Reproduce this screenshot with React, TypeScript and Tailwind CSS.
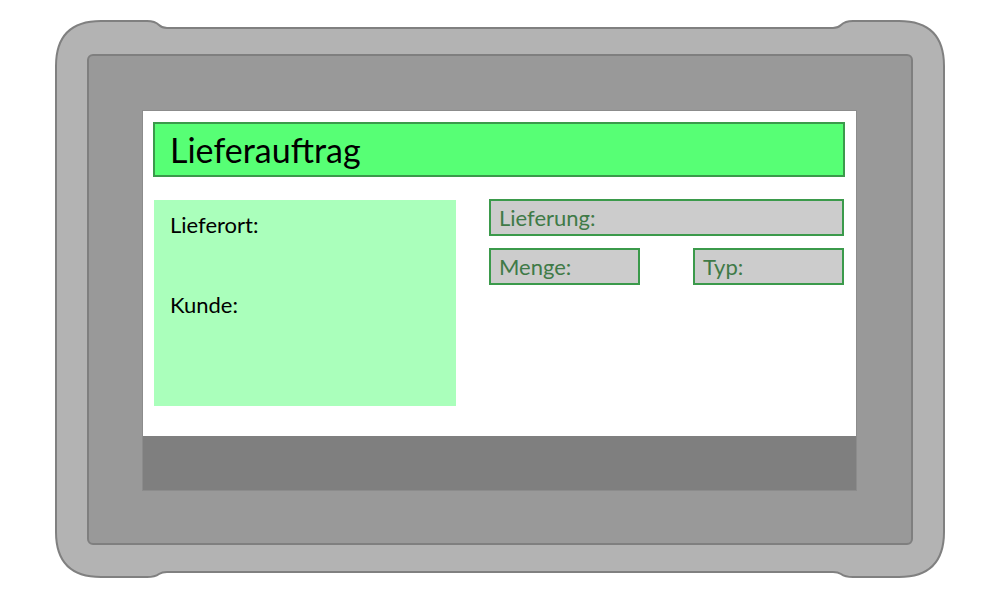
import React from 'react';

// Device shell outline: rounded body with raised bumper corners
function Shell() {
  return (
    <svg className="absolute inset-0" width="890" height="558" viewBox="0 0 890 558">
      <path
        d="M1 46 Q1 1 46 1 L92 1 Q100 1 104 5 Q107 8 112 8 L778 8 Q783 8 786 5 Q790 1 798 1 L844 1 Q889 1 889 46 L889 512 Q889 557 844 557 L798 557 Q790 557 786 554 Q783 552 778 552 L112 552 Q107 552 104 554 Q100 557 92 557 L46 557 Q1 557 1 512 Z"
        fill="#b3b3b3"
        stroke="#808080"
        strokeWidth="2"
      />
    </svg>
  );
}

function Field({ label, className }: { label: string; className: string }) {
  return (
    <div
      className={`flex h-[37px] items-center border-2 border-[#3b9a4b] bg-[#cccccc] px-[8px] text-[22px] text-[#3f7a47] ${className}`}
    >
      {label}
    </div>
  );
}

export default function App() {
  return (
    <div
      className="h-[600px] w-[1000px] bg-white pl-[55px] pt-[20px]"
      style={{ fontFamily: 'Lato, "Open Sans", sans-serif' }}
    >
      <div className="relative h-[558px] w-[890px] pl-[32px] pt-[34px]">
        <Shell />
        <div className="relative h-[491px] w-[826px] rounded-[6px] border-2 border-[#7f7f7f] bg-[#999999] pl-[53px] pt-[54px]">
          <div className="w-[715px] border border-[#8c8c8c]">
            <div className="h-[325px] bg-white px-[10px] pt-[11px]">
              <div className="flex h-[55px] w-[692px] items-center border-2 border-[#3b9a4b] bg-[#57ff75] pl-[15px] text-[34px] text-black">
                Lieferauftrag
              </div>
              <div className="mt-[23px] flex gap-[33px] pl-[1px]">
                <div className="flex h-[206px] w-[302px] flex-col bg-[#aaffbb] pl-[16px] pt-[8px] text-[22px] text-black">
                  <div>Lieferort:</div>
                  <div className="mt-[47px]">Kunde:</div>
                </div>
                <div className="-mt-[1px] flex w-[355px] flex-col gap-[12px]">
                  <Field label="Lieferung:" className="w-[355px]" />
                  <div className="flex justify-between">
                    <Field label="Menge:" className="w-[151px]" />
                    <Field label="Typ:" className="w-[151px]" />
                  </div>
                </div>
              </div>
            </div>
            <div className="h-[54px] bg-[#7f7f7f]" />
          </div>
        </div>
      </div>
    </div>
  );
}
